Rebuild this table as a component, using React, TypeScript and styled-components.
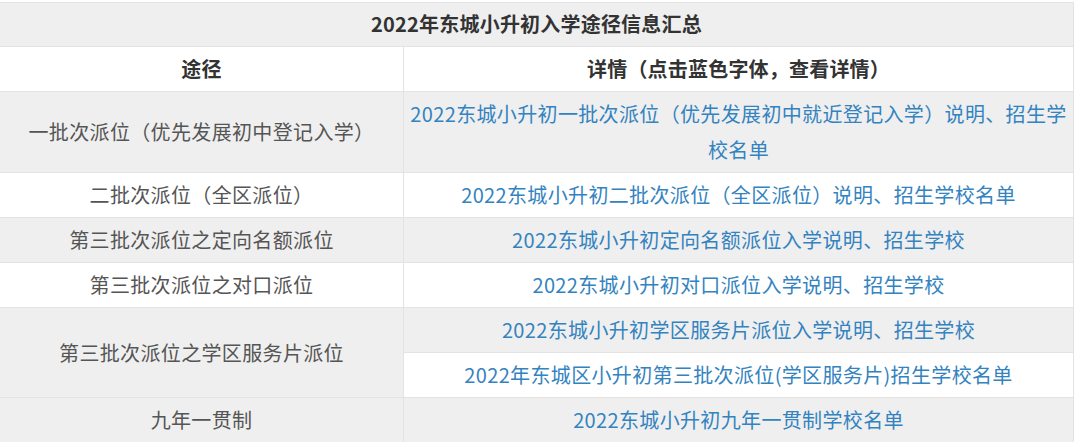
import React from "react";
import styled, { createGlobalStyle, css } from "styled-components";

const GlobalStyle = createGlobalStyle`
  html, body {
    margin: 0;
    padding: 0;
    background: #ffffff;
  }
  body {
    font-family: "Noto Sans CJK SC", "Noto Sans", sans-serif;
  }
`;

const Page = styled.div`
  width: 1080px;
  padding-top: 2px;
`;

const Table = styled.table`
  width: 1075px;
  margin-left: -1px;
  border-collapse: collapse;
  table-layout: fixed;
  font-size: 20px;
  line-height: 36px;
  letter-spacing: 0.35px;
`;

const Row = styled.tr<{ $shaded?: boolean }>`
  background: ${({ $shaded }) => ($shaded ? "#efefef" : "#ffffff")};
`;

const Cell = styled.td<{ $head?: boolean; $shaded?: boolean }>`
  border: 1px solid #e3e3e3;
  padding: 4px 2px;
  text-align: center;
  vertical-align: middle;
  color: #555555;
  ${({ $shaded }) =>
    $shaded &&
    css`
      background: #efefef;
    `}
  ${({ $head }) =>
    $head &&
    css`
      color: #333333;
      font-weight: 700;
      letter-spacing: 0.2px;
    `}
`;

const Title = styled(Cell)`
  padding: 3px 10px 4px;
`;

const Link = styled.a`
  color: #3383c0;
  text-decoration: none;
  cursor: pointer;
`;

interface Route {
  name: string;
  links: string[];
}

const routes: Route[] = [
  {
    name: "一批次派位（优先发展初中登记入学）",
    links: ["2022东城小升初一批次派位（优先发展初中就近登记入学）说明、招生学校名单"],
  },
  {
    name: "二批次派位（全区派位）",
    links: ["2022东城小升初二批次派位（全区派位）说明、招生学校名单"],
  },
  {
    name: "第三批次派位之定向名额派位",
    links: ["2022东城小升初定向名额派位入学说明、招生学校"],
  },
  {
    name: "第三批次派位之对口派位",
    links: ["2022东城小升初对口派位入学说明、招生学校"],
  },
  {
    name: "第三批次派位之学区服务片派位",
    links: [
      "2022东城小升初学区服务片派位入学说明、招生学校",
      "2022年东城区小升初第三批次派位(学区服务片)招生学校名单",
    ],
  },
  {
    name: "九年一贯制",
    links: ["2022东城小升初九年一贯制学校名单"],
  },
];

const App: React.FC = () => {
  let index = 0;
  const rows: React.ReactNode[] = [];
  routes.forEach((route) => {
    route.links.forEach((link, i) => {
      const shaded = index % 2 === 0;
      rows.push(
        <Row key={link} $shaded={shaded}>
          {i === 0 && (
            <Cell rowSpan={route.links.length} $shaded={shaded}>
              {route.name}
            </Cell>
          )}
          <Cell>
            <Link>{link}</Link>
          </Cell>
        </Row>
      );
      index++;
    });
  });

  return (
    <Page>
      <GlobalStyle />
      <Table>
        <colgroup>
          <col style={{ width: 404 }} />
          <col />
        </colgroup>
        <tbody>
          <Row $shaded>
            <Title colSpan={2} $head>
              2022年东城小升初入学途径信息汇总
            </Title>
          </Row>
          <Row>
            <Cell $head>途径</Cell>
            <Cell $head>详情（点击蓝色字体，查看详情）</Cell>
          </Row>
          {rows}
        </tbody>
      </Table>
    </Page>
  );
};

export default App;
